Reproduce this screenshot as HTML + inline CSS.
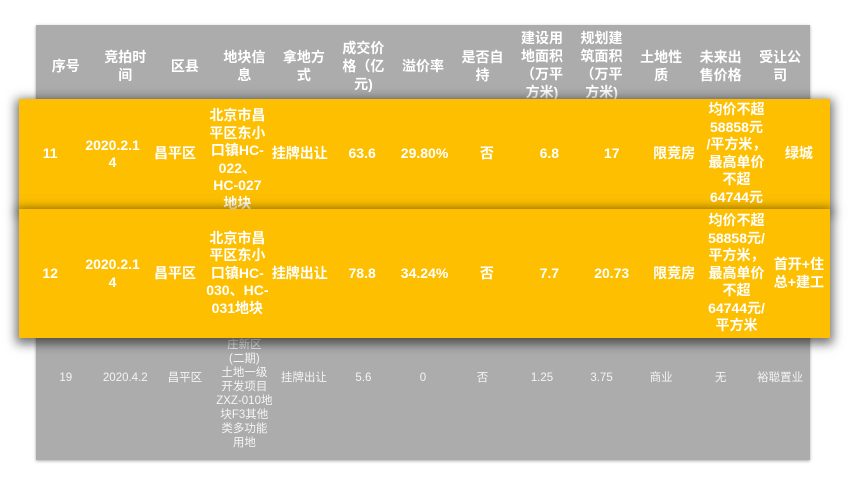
<!DOCTYPE html>
<html><head><meta charset="utf-8"><style>
*{margin:0;padding:0;box-sizing:border-box}
body{width:853px;height:495px;background:#fff;position:relative;overflow:hidden;font-family:"Liberation Sans","Noto Sans CJK SC",sans-serif;color:#fff}
.tbl{position:absolute;left:36px;top:25px;width:774px;height:435px;background:#acacac;box-shadow:0 1px 3px rgba(0,0,0,.35)}
.row{position:absolute;display:flex;overflow:hidden}
.row>div{flex:1;display:flex;align-items:center;justify-content:center;text-align:center;overflow:hidden;white-space:nowrap}
.hd{left:36px;top:25px;width:774px;height:74px;font-weight:bold;font-size:14px;line-height:18px}
.hd>div{padding-top:8px}
.hd>div.f{padding-top:6px}
.y{left:19px;width:811px;background:#fdbf00;font-weight:bold;font-size:14px;line-height:17.5px;box-shadow:0 3px 10px 3px rgba(0,0,0,.55)}
.g{left:36px;top:338px;width:774px;height:80px;font-size:11.5px;line-height:14px;color:#f4f4f4;overflow:visible}
</style></head><body>
<div class="tbl"></div>
<div class="row hd">
<div>序号</div><div>竞拍时<br>间</div><div>区县</div><div>地块信<br>息</div><div>拿地方<br>式</div><div>成交价<br>格（亿<br>元)</div><div>溢价率</div><div>是否自<br>持</div><div class="f">建设用<br>地面积<br>（万平<br>方米)</div><div class="f">规划建<br>筑面积<br>（万平<br>方米)</div><div>土地性<br>质</div><div>未来出<br>售价格</div><div>受让公<br>司</div>
</div>
<div class="row g">
<div>19</div><div>2020.4.2</div><div>昌平区</div><div style="position:relative;overflow:visible;align-items:flex-start;height:112px">庄新区<br>(二期)<br>土地一级<br>开发项目<br>ZXZ-010地<br>块F3其他<br>类多功能<br>用地</div><div>挂牌出让</div><div>5.6</div><div>0</div><div>否</div><div>1.25</div><div>3.75</div><div>商业</div><div>无</div><div>裕聪置业</div>
</div>
<div class="row y" style="top:99px;height:110px;z-index:1">
<div>11</div><div>2020.2.1<br>4</div><div>昌平区</div><div style="align-items:flex-start;padding-top:8px">北京市昌<br>平区东小<br>口镇HC-<br>022、<br>HC-027<br>地块</div><div>挂牌出让</div><div>63.6</div><div>29.80%</div><div>否</div><div>6.8</div><div>17</div><div>限竞房</div><div style="align-items:flex-start;padding-top:2px">均价不超<br>58858元<br>/平方米，<br>最高单价<br>不超<br>64744元</div><div>绿城</div>
</div>
<div class="row y" style="top:209px;height:129px;z-index:2">
<div>12</div><div>2020.2.1<br>4</div><div>昌平区</div><div>北京市昌<br>平区东小<br>口镇HC-<br>030、HC-<br>031地块</div><div>挂牌出让</div><div>78.8</div><div>34.24%</div><div>否</div><div>7.7</div><div>20.73</div><div>限竞房</div><div>均价不超<br>58858元/<br>平方米，<br>最高单价<br>不超<br>64744元/<br>平方米</div><div>首开+住<br>总+建工</div>
</div>
</body></html>
